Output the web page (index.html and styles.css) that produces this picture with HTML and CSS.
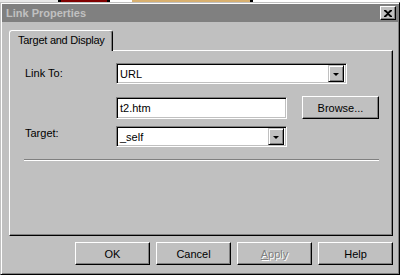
FILE: index.html
```html
<!DOCTYPE html>
<html lang="en">
<head>
    <meta charset="UTF-8">
    <title>Link Properties</title>
    <link rel="stylesheet" href="styles.css">
</head>
<body>
    <div class="strip">
        <span class="seg seg-light"></span>
        <span class="seg seg-dark"></span>
        <span class="seg seg-red"></span>
        <span class="seg seg-dark"></span>
        <span class="seg seg-white"></span>
        <span class="seg seg-tan"></span>
        <span class="seg seg-dark"></span>
        <span class="seg seg-rest"></span>
    </div>
    <div class="window">
        <div class="titlebar">
            <span class="title">Link Properties</span>
            <button class="close-btn" aria-label="Close">
                <svg width="8" height="7" viewBox="0 0 8 7">
                    <path d="M0 0h2l2 2 2-2h2v1L5 3.5 8 6v1H6L4 5 2 7H0V6l3-2.5L0 1z" fill="#000"/>
                </svg>
            </button>
        </div>

        <div class="dialog">
            <div class="tabs">
                <div class="tab active">Target and Display</div>
            </div>
            <div class="panel">
                <div class="form">
                    <label class="label">Link To:</label>
                    <div class="field select wide">
                        <span class="value">URL</span>
                        <span class="drop"><span class="arrow"></span></span>
                    </div>

                    <span></span>
                    <div class="row">
                        <div class="field input"><span class="value">t2.htm</span></div>
                        <button class="btn browse">Browse...</button>
                    </div>

                    <label class="label">Target:</label>
                    <div class="field select narrow">
                        <span class="value">_self</span>
                        <span class="drop"><span class="arrow"></span></span>
                    </div>
                </div>
                <div class="separator"></div>
            </div>

            <div class="actions">
                <button class="btn">OK</button>
                <button class="btn">Cancel</button>
                <button class="btn disabled"><u>A</u>pply</button>
                <button class="btn">Help</button>
            </div>
        </div>
    </div>
</body>
</html>
```

FILE: styles.css
```css
:root {
    --face: #c0c0c0;
    --shadow: #808080;
    --light: #ffffff;
    --dark: #000000;
}

* {
    box-sizing: border-box;
}

body {
    margin: 0;
    width: 400px;
    height: 275px;
    overflow: hidden;
    background: var(--face);
    font-family: "Liberation Sans", Arial, sans-serif;
    font-size: 11px;
    color: #000;
}

/* bit of desktop showing above the window */
.strip {
    display: flex;
    height: 2px;
}

.seg { height: 2px; }
.seg-light { width: 58px; background: #e8e8e8; }
.seg-dark { width: 3px; background: #000; }
.seg-red { width: 46px; background: #800000; }
.seg-white { width: 22px; background: #fff; }
.seg-tan { width: 118px; background: #d8b070; }
.seg-rest { flex: 1; background: #fff; }

.window {
    height: 273px;
    padding: 1px;
    border: 1px solid;
    border-color: var(--face) var(--dark) var(--dark) var(--face);
    box-shadow: inset 1px 1px var(--light), inset -1px -1px var(--shadow);
    background: var(--face);
}

.titlebar {
    display: flex;
    align-items: center;
    justify-content: space-between;
    height: 18px;
    padding: 0 2px 0 4px;
    background: var(--shadow);
}

.title {
    color: var(--face);
    font-weight: bold;
}

.close-btn {
    display: flex;
    align-items: center;
    justify-content: center;
    width: 16px;
    height: 14px;
    padding: 0;
    border: 1px solid;
    border-color: var(--light) var(--dark) var(--dark) var(--light);
    box-shadow: inset -1px -1px var(--shadow);
    background: var(--face);
}

.dialog {
    padding: 8px 5px 0 7px;
}

.tabs {
    display: flex;
    position: relative;
    z-index: 1;
}

.tab {
    height: 21px;
    padding: 3px 7px 0 8px;
    letter-spacing: -0.25px;
    border: 1px solid;
    border-bottom: none;
    border-color: var(--light) var(--dark) var(--face) var(--light);
    border-radius: 3px 3px 0 0;
    box-shadow: inset -1px 0 var(--shadow);
    background: var(--face);
    margin-bottom: -1px;
}

.panel {
    height: 186px;
    padding: 12px 13px 0 15px;
    border: 1px solid;
    border-color: var(--light) var(--dark) var(--dark) var(--light);
    box-shadow: inset -1px -1px var(--shadow);
}

.form {
    display: grid;
    grid-template-columns: 91px 1fr;
    align-items: center;
}

.label {
    padding-bottom: 1px;
}

.field {
    display: flex;
    align-items: center;
    height: 21px;
    border: 1px solid;
    border-color: var(--shadow) var(--light) var(--light) var(--shadow);
    box-shadow: inset 1px 1px var(--dark), inset -1px -1px var(--face);
    background: #fff;
    padding: 2px;
}

.value {
    flex: 1;
    padding-left: 1px;
}

.select.wide { width: 231px; }
.select.narrow { width: 171px; margin-top: 7px; }

.row {
    display: flex;
    align-items: center;
    gap: 15px;
    margin-top: 12px;
}

.input {
    width: 171px;
    height: 22px;
}

.drop {
    display: flex;
    align-items: center;
    justify-content: center;
    width: 16px;
    height: 17px;
    border: 1px solid;
    border-color: var(--face) var(--dark) var(--dark) var(--face);
    box-shadow: inset 1px 1px var(--light), inset -1px -1px var(--shadow);
    background: var(--face);
}

.arrow {
    width: 0;
    height: 0;
    margin-top: 2px;
    border-left: 3px solid transparent;
    border-right: 3px solid transparent;
    border-top: 3px solid #000;
}

.btn {
    width: 75px;
    height: 23px;
    padding: 0;
    border: 1px solid;
    border-color: var(--light) var(--dark) var(--dark) var(--light);
    box-shadow: inset -1px -1px var(--shadow);
    background: var(--face);
    font-family: inherit;
    font-size: 11px;
    color: #000;
}

.browse {
    width: 77px;
}

.btn.disabled {
    color: var(--shadow);
    text-shadow: 1px 1px var(--light);
}

.separator {
    height: 2px;
    width: 355px;
    margin: 12px 0 0 -1px;
    border-top: 1px solid var(--shadow);
    border-bottom: 1px solid var(--light);
}

.actions {
    display: flex;
    justify-content: flex-end;
    gap: 6px;
    margin-top: 6px;
}
```
